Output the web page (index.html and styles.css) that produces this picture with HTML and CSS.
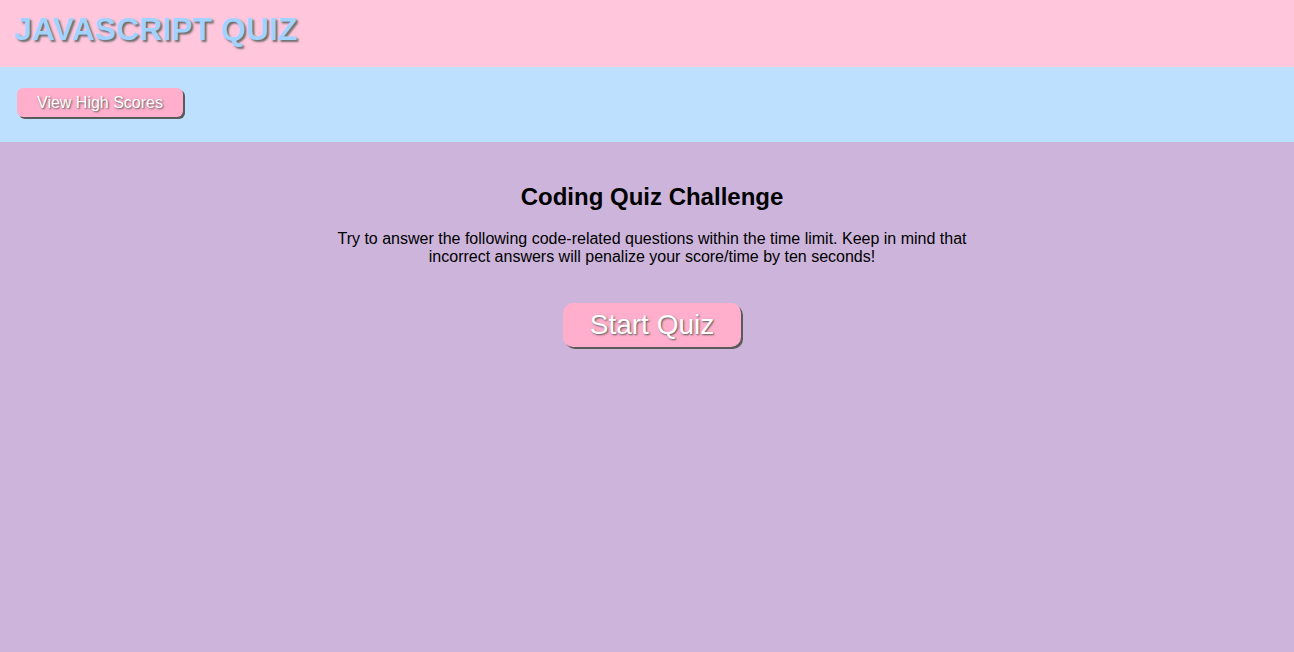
FILE: index.html
```html
<!DOCTYPE html>
<html>
<head>
<meta charset="utf-8">
<link rel="stylesheet" href="styles.css">
</head>
<body>
<header class="top">
  <h1 class="title">JAVASCRIPT QUIZ</h1>
</header>
<nav class="bar">
  <button class="btn btn-small">View High Scores</button>
</nav>
<main class="main">
  <h2 class="heading">Coding Quiz Challenge</h2>
  <p class="intro">Try to answer the following code-related questions within the time limit. Keep in mind that incorrect answers will penalize your score/time by ten seconds!</p>
  <button class="btn btn-big">Start Quiz</button>
</main>
</body>
</html>
```
FILE: styles.css
```css
html, body {
  margin: 0;
  padding: 0;
  height: 100%;
}
body {
  font-family: Arial, "Liberation Sans", sans-serif;
  background: #cdb4db;
  display: flex;
  flex-direction: column;
}
.top {
  background: #ffc6dc;
  height: 67px;
  padding: 11px 15px 0 14px;
  box-sizing: border-box;
}
.title {
  margin: 0;
  font-size: 32px;
  font-weight: bold;
  color: #a2d2ff;
  text-shadow: 2px 2px 2px #6e6e6e;
}
.bar {
  background: #bde0fe;
  height: 75px;
  padding: 21px 17px 0;
  box-sizing: border-box;
}
.btn {
  font-family: Arial, "Liberation Sans", sans-serif;
  background: #ffafcc;
  color: #fff;
  border: none;
  border-radius: 6px;
  box-shadow: 2px 2px 0 #5a5a5a;
  text-shadow: 1px 1px 2px #555;
  cursor: pointer;
}
.btn-small {
  font-size: 16px;
  height: 29px;
  width: 166px;
  padding: 0;
}
.main {
  flex: 1;
  display: flex;
  flex-direction: column;
  align-items: center;
  padding: 41px 0 0 10px;
}
.heading {
  margin: 0;
  font-size: 24px;
  font-weight: bold;
  color: #000;
}
.intro {
  margin: 19px 0 0;
  width: 640px;
  text-align: center;
  font-size: 16px;
  line-height: 18.4px;
  color: #000;
}
.btn-big {
  margin-top: 36px;
  font-size: 28px;
  width: 178px;
  height: 44px;
  padding: 0;
  border-radius: 10px;
}
```
